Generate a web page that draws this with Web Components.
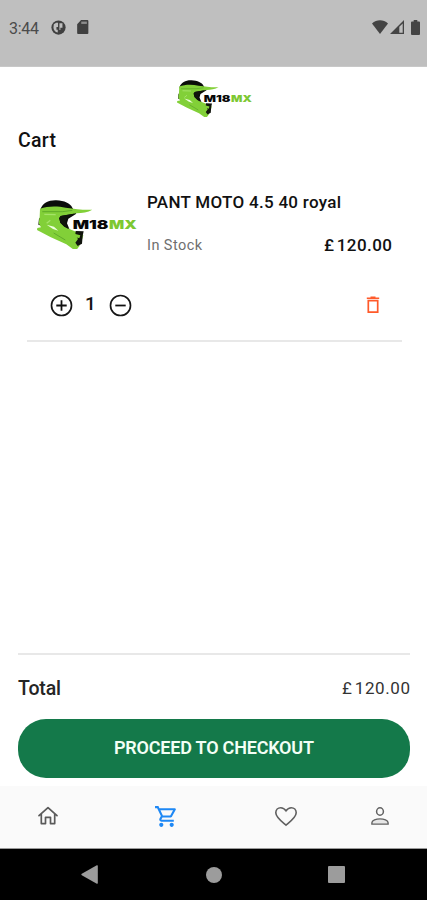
<!DOCTYPE html>
<html lang="en">
<head>
<meta charset="utf-8">
<title>Cart</title>
<style>
html,body{margin:0;height:100%;background:#fff}
body{font-family:Roboto,"Liberation Sans",sans-serif;color:#111;overflow:hidden}
</style>
</head>
<body>
<cart-app></cart-app>
<script>
// Text run whose letter spacing is adjusted to fill a given width.
class FitText extends HTMLElement{
  connectedCallback(){
    const r=this.attachShadow({mode:'open'});
    r.innerHTML='<style>:host{display:block;white-space:nowrap}span{display:inline-block}</style><span><slot></slot></span>';
    const s=r.querySelector('span'),w=+this.getAttribute('width'),n=this.textContent.length;
    if(w&&n>1){
      const ls=(w-s.getBoundingClientRect().width)/(n-1);
      s.style.letterSpacing=ls.toFixed(3)+'px';
      s.style.marginRight=(-ls).toFixed(3)+'px';
    }
  }
}

const icons={
 web:['0 0 16 16','<circle cx="8" cy="8" r="7.600" fill="#404040"/><path d="M3 4.600 5.500 3h2v4.500H5.800v3h1.400v2.800C4.500 13 2.600 10.600 2.600 8zM9 3.500h3.200v4.700H10v2.400H9z" fill="#bfbfbf"/>'],
 sd:['0 0 12 15','<path d="M4.200 0H11a1 1 0 0 1 1 1v13a1 1 0 0 1-1 1H1a1 1 0 0 1-1-1V4.500z" fill="#404040"/><path d="M4.400 1.700h6v2.500h-6z" fill="#8d8d8d"/>'],
 wifi:['0 0 16 14','<path d="M0 3.600C4.600-.8 11.400-.8 16 3.600L8 14z" fill="#444"/>'],
 signal:['0 0 14 14','<path d="M14 0v14H0zM12.700 3.400 9.300 6.800v5.900h3.400z" fill="#444" fill-rule="evenodd"/>'],
 battery:['0 0 9 15','<path d="M2.700 0h3.600v1.600H8a1 1 0 0 1 1 1V14a1 1 0 0 1-1 1H1a1 1 0 0 1-1-1V2.600a1 1 0 0 1 1-1h1.700z" fill="#444"/>'],
 plus:['0 0 24 24','<circle cx="12" cy="12" r="9.600" fill="none" stroke="#161616" stroke-width="1.600"/><path d="M12 7v10M7 12h10" stroke="#111" stroke-width="1.700"/>'],
 minus:['0 0 24 24','<circle cx="12" cy="12" r="9.600" fill="none" stroke="#161616" stroke-width="1.600"/><path d="M7 12h10" stroke="#111" stroke-width="1.700"/>'],
 trash:['0 0 14 18','<path d="M.8 2.300h12.400M4.500 1.200h5" stroke="#ff5a2a" stroke-width="1.500"/><path d="M2.300 4.700h9.400v11.500H2.300z" fill="none" stroke="#ff5a2a" stroke-width="1.700"/>'],
 home:['0 0 24 24','<path d="M3 11.700 12 3.700l9 8M5.300 10v9.600h4.200v-6.300h5v6.300h4.200V10" fill="none" stroke="#5a5a5a" stroke-width="1.700" stroke-linejoin="round" stroke-linecap="round"/>'],
 cart:['0 0 24 24','<path fill="#1e88f5" d="M15.550 13c.75 0 1.410-.41 1.750-1.030l3.580-6.490c.37-.66-.11-1.480-.87-1.480H5.210l-.94-2H1v2h2l3.600 7.590-1.350 2.440C4.520 15.370 5.480 17 7 17h12v-2H7l1.100-2h7.450zM6.160 6h12.150l-2.760 5H8.530L6.160 6zM7 18c-1.100 0-1.990.9-1.990 2S5.900 22 7 22s2-.9 2-2-.9-2-2-2zm10 0c-1.100 0-1.990.9-1.990 2s.89 2 1.990 2 2-.9 2-2-.9-2-2-2z"/>'],
 heart:['0 0 24 21','<path d="M12 19.200C8 15.900 1.800 11.400 1.800 6.800 1.800 3.700 4 1.700 6.700 1.700c2.300 0 4 1.200 5.300 3.200 1.300-2 3-3.200 5.300-3.200 2.700 0 4.900 2 4.900 5.100 0 4.600-6.200 9.100-10.200 12.400z" fill="none" stroke="#606060" stroke-width="1.600"/>'],
 person:['0 0 18 18','<ellipse cx="9" cy="4.500" rx="3.400" ry="3.700" fill="none" stroke="#626262" stroke-width="1.500"/><path d="M.9 17.100v-1.300c0-2.600 4.300-3.900 8.100-3.900s8.100 1.300 8.100 3.900v1.300z" fill="#e6e6e6" stroke="#626262" stroke-width="1.400"/>'],
 back:['0 0 17 19','<path d="M15.800.3q1-.5 1 .6v17.200q0 1.100-1 .6L.8 10.200q-1-.7 0-1.400z" fill="#9c9c9c"/>'],
 circle:['0 0 16 16','<circle cx="8" cy="8" r="8" fill="#9c9c9c"/>'],
 square:['0 0 17 17','<rect width="17" height="17" rx="1" fill="#9c9c9c"/>']
};
class UiIcon extends HTMLElement{
  connectedCallback(){
    const [vb,body]=icons[this.getAttribute('name')],w=this.getAttribute('w'),h=this.getAttribute('h')||w;
    this.attachShadow({mode:'open'}).innerHTML=`<style>:host{display:block;flex:none;width:${w}px;height:${h}px}svg{display:block}</style><svg width="${w}" height="${h}" viewBox="${vb}">${body}</svg>`;
  }
}

class BrandLogo extends HTMLElement{
  connectedCallback(){
    const w=+this.getAttribute('w');
    this.attachShadow({mode:'open'}).innerHTML=`<style>:host{display:block;flex:none;width:${w}px}svg{display:block}text{font:900 37px Inter,"DejaVu Sans",sans-serif}</style>
    <svg width="${w}" height="${w*.487}" viewBox="35 32 300 146">
      <g transform="translate(27 21)">
      <path fill="#0b0d0a" d="M18 40C24 20 44 11 66 12c24 1 42 9 48 22l12 18-24 15-4 14 8 19-32 4-62-19 2-18 9-8z"/>
      <path fill="#82d038" d="M17 37c24-9 54-8 77-3 30 4 50 7 80 6-14 8-30 10-48 11l-44 7-8 7 4 14 12 12 17 8 25 10 15 8-3 10-12 11 4 10-12 16-28-20-48-22-40-21 1-6 11-2-7-12 3-20z"/>
      <path fill="#10140c" d="M78 59l42-7-20 12c-5 5-7 11-6 17l8 17-13-8-11-11-3-13z"/>
      <path fill="#10140c" d="M124 104l24 1-3 13-2 24-13 7-7-10 8-11-8-12z"/>
      <path fill="#82d038" d="M120 112l18 5-3 9-13-4z"/>
      <path d="M24 46h60l30-4" fill="none" stroke="#4b9620" stroke-width="2"/>
      <path d="M30 54l34 1M48 72l-11 9" fill="none" stroke="#a5e468" stroke-width="4"/>
      <path fill="#efffdf" d="M37 85l22 6 13 12-16-5z"/>
      <path d="M58 110l35 21" fill="none" stroke="#5aa22a" stroke-width="2.500"/>
      </g>
      <text x="142" y="120" fill="#080808" textLength="107" lengthAdjust="spacingAndGlyphs">M18</text>
      <text x="251" y="120" fill="#7dc832" textLength="83" lengthAdjust="spacingAndGlyphs">MX</text>
    </svg>`;
  }
}

const define=(name,html)=>customElements.define(name,class extends HTMLElement{
  constructor(){super();const t=document.createElement('template');t.innerHTML=html;this.attachShadow({mode:'open'}).append(t.content.cloneNode(true));}
});
customElements.define('fit-text',FitText);
customElements.define('ui-icon',UiIcon);
customElements.define('brand-logo',BrandLogo);

define('status-bar',`<style>
:host{display:flex;box-sizing:border-box;height:67px;background:#bfbfbf;padding:19px 7px 0 9px;border-bottom:1px solid #c8c8c8;justify-content:space-between;color:#4b4b4b}
div{display:flex;height:16px;align-items:center}fit-text{font-size:16px;line-height:20px;margin:3px 12px 0 0}
.l ui-icon+ui-icon{margin-left:11px}.r{gap:2px}.r ui-icon:last-child{margin-left:5px}</style>
<div class="l"><fit-text width="30">3:44</fit-text><ui-icon name="web" w="15"></ui-icon><ui-icon name="sd" w="11.500" h="14"></ui-icon></div>
<div class="r"><ui-icon name="wifi" w="16" h="14"></ui-icon><ui-icon name="signal" w="14"></ui-icon><ui-icon name="battery" w="9" h="15"></ui-icon></div>`);

define('cart-item',`<style>
:host{display:block;margin:37px 25px 0 27px;border-bottom:2px solid #e8e8e8;height:150px}
.top{display:grid;grid-template-columns:110px 1fr;padding:0 10px}
brand-logo{margin-top:10px}
::slotted(*){font-size:17px;line-height:24px;font-weight:500}
.row{display:flex;justify-content:space-between;margin-top:19px;margin-right:-1px}
.stock{font-size:14.500px;line-height:20px;color:#6f6f6f;margin-top:3px}
.price{font-size:17px;line-height:24px;font-weight:500;margin-right:1px;word-spacing:-2.500px}
.act{display:flex;align-items:center;margin-top:35px;padding:0 22px 0 21.500px;height:26px}
.qty{font-size:19px;line-height:24px;font-weight:500;width:34px;text-align:center;margin-top:-2px}
.act ui-icon:last-child{margin-left:auto}</style>
<div class="top"><brand-logo w="100"></brand-logo><div><slot name="name"></slot>
<div class="row"><fit-text class="stock" width="55">In Stock</fit-text><fit-text class="price" width="68">£ 120.00</fit-text></div></div></div>
<div class="act"><ui-icon name="plus" w="25"></ui-icon><fit-text class="qty">1</fit-text><ui-icon name="minus" w="25"></ui-icon><ui-icon name="trash" w="14" h="18"></ui-icon></div>`);

define('cart-summary',`<style>
:host{display:block;margin:0 17px 8px 18px;border-top:2px solid #e8e8e8;padding-top:21px}
.row{display:flex;justify-content:space-between;height:43px}
.total{font-size:19.500px;line-height:26px;font-weight:500;color:#252525}
.sum{font-size:17px;line-height:26px;font-weight:400;color:#333;margin-top:-1px;word-spacing:-2.500px}
button{display:flex;width:392px;height:59px;border:0;border-radius:28px;background:#14794a;color:#f3fff5;align-items:center;justify-content:center;font:600 18px/24px Roboto,"Liberation Sans",sans-serif;padding:0 0 2px}
fit-text{flex:none}</style>
<div class="row"><fit-text class="total" width="43">Total</fit-text><fit-text class="sum" width="68">£ 120.00</fit-text></div>
<button><fit-text width="200">PROCEED TO CHECKOUT</fit-text></button>`);

define('tab-bar',`<style>:host{display:flex;box-sizing:border-box;height:63px;background:#fafafa;border-bottom:1px solid #9a9a9a;align-items:center;justify-content:space-between;padding:0 38px 2px 36px}
ui-icon:nth-of-type(2){margin-left:21px}ui-icon:nth-of-type(3){margin-left:22px}</style>
<ui-icon name="home" w="24"></ui-icon><ui-icon name="cart" w="25"></ui-icon><ui-icon name="heart" w="24" h="21"></ui-icon><ui-icon name="person" w="18"></ui-icon>`);

define('system-nav',`<style>:host{display:flex;box-sizing:border-box;height:51px;background:#000;align-items:center;justify-content:space-between;padding:0 82px 0 81px}
ui-icon:nth-of-type(2){margin-left:2px}</style>
<ui-icon name="back" w="17" h="19"></ui-icon><ui-icon name="circle" w="16"></ui-icon><ui-icon name="square" w="17"></ui-icon>`);

define('cart-app',`<style>:host{display:flex;flex-direction:column;width:427px;height:900px;background:#fff}
header{display:flex;flex:none;padding:13px 0 0 176.500px;height:48px;box-sizing:border-box}
status-bar,tab-bar,system-nav,cart-summary{flex:none}
.title{font-size:19.500px;line-height:24px;font-weight:500;margin:14px 0 0 18px}
main{flex:1;min-height:0;overflow:hidden;display:flow-root;margin-top:0}</style>
<status-bar></status-bar><header><brand-logo w="75"></brand-logo></header>
<main><fit-text class="title" width="38">Cart</fit-text><cart-item><fit-text slot="name" width="194">PANT MOTO 4.5 40 royal</fit-text></cart-item></main>
<cart-summary></cart-summary><tab-bar></tab-bar><system-nav></system-nav>`);
</script>
</body>
</html>
